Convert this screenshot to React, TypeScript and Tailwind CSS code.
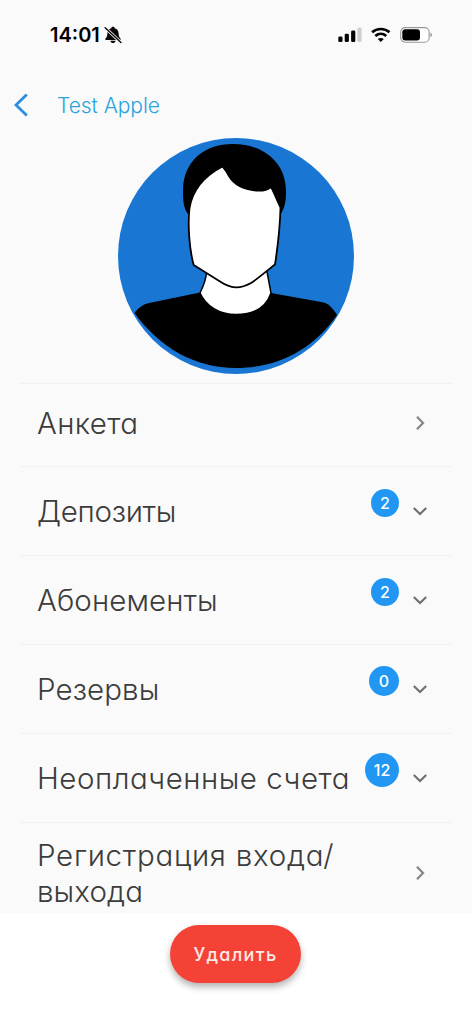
const labelFont =
  "font-['Inter','Liberation_Sans',sans-serif] [font-feature-settings:'cv11'_1]";

type Item = {
  lines: { text: string; className: string }[];
  count?: number;
  badge?: string;
  height: string;
};

const items: Item[] = [
  { lines: [{ text: "Анкета", className: "tracking-[0.35px]" }], height: "h-[83px] pb-[4px]" },
  {
    lines: [{ text: "Депозиты", className: "tracking-[-0.3px]" }],
    count: 2,
    badge: "size-7",
    height: "h-[89px]",
  },
  {
    lines: [{ text: "Абонементы", className: "tracking-[0.1px]" }],
    count: 2,
    badge: "size-7",
    height: "h-[89px]",
  },
  {
    lines: [{ text: "Резервы", className: "tracking-[0.1px]" }],
    count: 0,
    badge: "size-[30px]",
    height: "h-[89px]",
  },
  {
    lines: [{ text: "Неоплаченные счета", className: "tracking-[0.52px]" }],
    count: 12,
    badge: "size-[34px]",
    height: "h-[89px]",
  },
  {
    lines: [
      { text: "Регистрация входа/", className: "tracking-[0.74px]" },
      { text: "выхода", className: "tracking-[0.1px]" },
    ],
    height: "h-[91px] pt-[9px]",
  },
];

function StatusBar() {
  return (
    <div className="flex h-[70px] shrink-0 items-center justify-between pl-[50px] pr-[39px]">
      <div className="flex items-center gap-[4px]">
        <span className="font-['Inter',sans-serif] text-[20px] leading-6 font-semibold tracking-[0px] text-black">
          14:01
        </span>
        <svg width="18" height="18" viewBox="0 0 19 19">
          <path
            d="M9.500 0.800c1.100 0 1.800.6 1.900 1.500 2.500.8 3.900 2.600 4 5.300.1 3 .7 4.200 2 5.500.6.6.3 1.600-.6 1.600H2.200c-.9 0-1.200-1-.6-1.600 1.300-1.300 1.900-2.500 2-5.500.1-2.700 1.500-4.500 4-5.300.1-.9.8-1.500 1.900-1.500zM6.700 15.500h5.600c-.3 1.600-1.500 2.500-2.800 2.500s-2.500-.9-2.800-2.500z"
            fill="#080808"
          />
          <path d="M1 1.700 18.500 18" stroke="#fafafa" strokeWidth="3.200" />
          <path d="M1.200 1.900 17.900 17.500" stroke="#080808" strokeWidth="1.500" strokeLinecap="round" />
        </svg>
      </div>
      <div className="flex items-center gap-[9px]">
        <svg width="24" height="16" viewBox="0 0 24 16">
          <rect x="0.300" y="9.500" width="4.200" height="5.500" rx="1.300" fill="#050505" />
          <rect x="6.700" y="6.800" width="4.200" height="8.200" rx="1.300" fill="#050505" />
          <rect x="13.100" y="3.600" width="4.200" height="11.400" rx="1.300" fill="#050505" />
          <rect x="19.400" y="0.500" width="4.200" height="14.500" rx="1.300" fill="#cfcfcf" />
        </svg>
        <svg width="20" height="16" viewBox="0 0 20 16" fill="none" stroke="#050505">
          <path d="M1.100 5.300C6 .9 13.600.9 18.500 5.300" strokeWidth="2.700" />
          <path d="M4.300 8.900c3.200-2.700 7.800-2.700 11 0" strokeWidth="2.600" />
          <path d="M9.800 15 6.800 12.100c1.700-1.500 4.300-1.500 6 0z" fill="#050505" stroke="none" />
        </svg>
        <svg width="33" height="16" viewBox="0 0 33 16">
          <rect x="0.700" y="0.600" width="28.400" height="14.600" rx="4.500" fill="#fff" stroke="#999" strokeWidth="1.100" />
          <rect x="2.300" y="2.300" width="17.700" height="11.200" rx="3" fill="#000" />
          <path d="M30.300 5.700c2.200.5 2.200 3.900 0 4.400z" fill="#999" />
        </svg>
      </div>
    </div>
  );
}

function Avatar() {
  return (
    <svg className="mx-auto shrink-0" width="236" height="236" viewBox="118 138 236 236">
      <clipPath id="avatarCircle">
        <circle cx="236" cy="256" r="118" />
      </clipPath>
      <g clipPath="url(#avatarCircle)">
        <rect x="118" y="138" width="236" height="236" fill="#1976d2" />
        <path
          d="M200 292.500 149 303C142 304.500 138 308.500 134.500 313 160 348 195 368 236 368S313 350 337 315C334 310 330 304.500 324 302.500L271 293z"
          fill="#000"
        />
        <path
          d="M206.500 272C206 281 203 287 200 293 206 306 219 314.500 236 314.500S266 308 271 293L266.500 269z"
          fill="#fff"
          stroke="#000"
          strokeWidth="1.500"
        />
        <path
          d="M187.500 213.500C183.800 208 182.800 201 183 190 183.500 162 203 144 233 144 264 144 286 163 286 191 286 199 285.500 206 281.500 213z"
          fill="#000"
        />
        <path
          d="M222.500 166.500C206 175 193 188 189.500 208 187.500 226 189.500 250 193.700 265L220 281.500C231 288.800 240 289.200 251 283 259 278 267 270.500 275 264.500 278 245 280 227 280.500 207.500 277 201 275 194 271 187 268 189.500 265 190.700 259 190.700 245 190 234 184.500 229 176 227 172 225 169.500 222.500 166.500z"
          fill="#fff"
          stroke="#000"
          strokeWidth="1.800"
          strokeLinejoin="round"
        />
      </g>
    </svg>
  );
}

function Chevron({ down }: { down: boolean }) {
  return (
    <svg
      className="shrink-0"
      width="16"
      height="16"
      viewBox="0 0 16 16"
      fill="none"
      stroke={down ? "#707070" : "#858585"}
      strokeWidth="2.200"
    >
      <path d={down ? "m1.800 5 6.200 6 6.200-6" : "m5 1.800 6 6.200-6 6.200"} />
    </svg>
  );
}

function Row({ item }: { item: Item }) {
  return (
    <li className={`flex items-center border-t border-[#f1f1f1] pr-[24px] pl-[17px] ${item.height}`}>
      <div className={`flex-1 text-[29.500px] leading-9 font-light whitespace-nowrap text-[#3c3c3c] ${labelFont}`}>
        {item.lines.map((line) => (
          <div key={line.text}>
            <span className={line.className}>{line.text}</span>
          </div>
        ))}
      </div>
      {item.count !== undefined && (
        <div className="mr-[13px] flex h-full items-center pb-[16px]">
          <span
            className={`flex items-center justify-center rounded-full bg-[#2196f3] text-[16px] font-medium text-white ${labelFont} ${item.badge}`}
          >
            {item.count}
          </span>
        </div>
      )}
      <Chevron down={item.count !== undefined} />
    </li>
  );
}

export default function App() {
  return (
    <div className="flex h-[1024px] w-[472px] flex-col overflow-hidden bg-[#fafafa]">
      <StatusBar />
      <header className="flex h-[68px] shrink-0 items-center pt-[2px] pl-[13px]">
        <svg width="16" height="24" viewBox="0 0 16 24" fill="none" stroke="#2a8fe0" strokeWidth="2.800">
          <path d="M13.800 1.500 3 12l10.800 10.500" />
        </svg>
        <h1
          className={`ml-[28px] pt-[2px] text-[21px] leading-6 font-light tracking-[-0.05px] text-[#2aa3e0] ${labelFont}`}
        >
          Test Apple
        </h1>
      </header>
      <Avatar />
      <main className="mt-[9px] shrink-0 px-5">
        <ul>
          {items.map((item) => (
            <Row key={item.lines[0].text} item={item} />
          ))}
        </ul>
      </main>
      <footer className="flex flex-1 items-start justify-center bg-white pt-[12px]">
        <button
          className={`mr-px h-[58px] w-[131px] rounded-full bg-[#f44336] text-[18px] font-medium tracking-[1.300px] text-[#ffe9e4] shadow-[0_4px_7px_rgba(0,0,0,0.3)] ${labelFont}`}
        >
          Удалить
        </button>
      </footer>
    </div>
  );
}
